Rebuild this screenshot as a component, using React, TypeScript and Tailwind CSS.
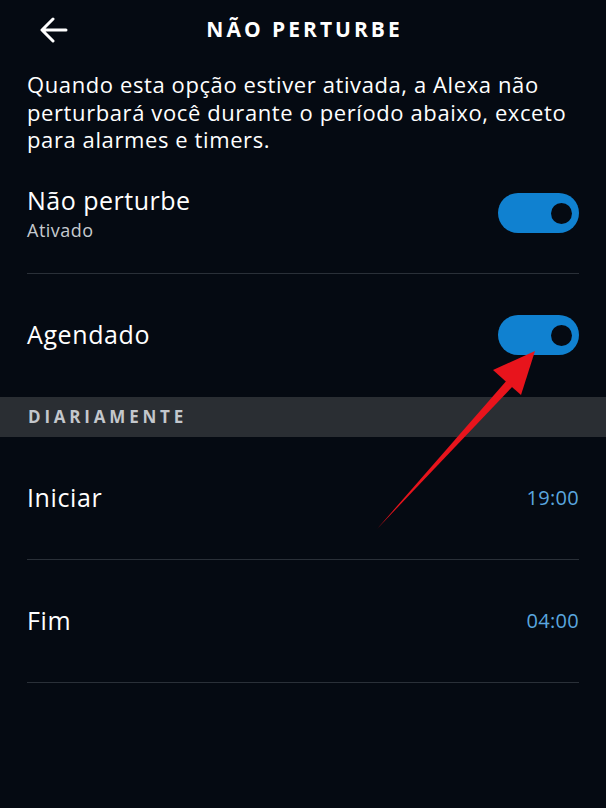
const Toggle = () => {
  return (
    <div className="flex h-[40px] w-[81px] items-center justify-end rounded-full bg-[#1081d0] pr-[7px]">
      <div className="h-[21px] w-[21px] rounded-full bg-[#050a12]" />
    </div>
  );
};

const TimeRow = ({ label, time }: { label: string; time: string }) => {
  return (
    <div className="mx-[27px] flex h-[123px] items-center justify-between border-b border-[#2a3038]">
      <span className="text-[25px] tracking-[0.6px] text-white">{label}</span>
      <span className="text-[20px] tracking-[0.3px] text-[#5aa6df]">{time}</span>
    </div>
  );
};

export default function App() {
  return (
    <div
      className="relative h-[808px] w-[606px] overflow-hidden bg-[#050a12] text-white"
      style={{ fontFamily: '"Open Sans", "Noto Sans", sans-serif' }}
    >
      <header className="relative flex h-[60px] items-center justify-center">
        <svg
          className="absolute left-[40px] top-[17px]"
          width="28"
          height="26"
          viewBox="0 0 28 26"
          fill="none"
          stroke="white"
          strokeWidth="3"
          strokeLinecap="round"
          strokeLinejoin="round"
        >
          <path d="M26 13H3M13 2 2 13l11 11" />
        </svg>
        <h1 className="pl-[3px] text-[21px] font-bold tracking-[3px]">NÃO PERTURBE</h1>
      </header>

      <p className="pl-[27px] pr-[18px] pt-[11px] text-[22px] leading-[27.5px] tracking-[0.6px] text-white">
        Quando esta opção estiver ativada, a Alexa não perturbará você durante o período abaixo, exceto para alarmes e
        timers.
      </p>

      <div className="mx-[27px] flex h-[120px] items-center justify-between border-b border-[#2a3038]">
        <div className="flex flex-col">
          <span className="text-[25px] leading-[32px] tracking-[0.5px]">Não perturbe</span>
          <span className="mt-[2px] text-[18px] leading-[24px] tracking-[0.5px] text-[#c6cacf]">Ativado</span>
        </div>
        <Toggle />
      </div>

      <div className="mx-[27px] flex h-[123px] items-center justify-between">
        <span className="text-[25px] tracking-[0.6px]">Agendado</span>
        <Toggle />
      </div>

      <div className="flex h-[40px] items-center bg-[#2a2e33] px-[28px]">
        <span className="text-[17px] font-bold tracking-[3.8px] text-[#c3c7cc]">DIARIAMENTE</span>
      </div>

      <TimeRow label="Iniciar" time="19:00" />
      <TimeRow label="Fim" time="04:00" />

      <svg className="pointer-events-none absolute left-0 top-0" width="606" height="808" viewBox="0 0 606 808">
        <path d="M377 529 L508 379 L514 385 Z" fill="#e8141c" />
        <path d="M535 351 L493 370 L521 395 Z" fill="#e8141c" />
      </svg>
    </div>
  );
}
